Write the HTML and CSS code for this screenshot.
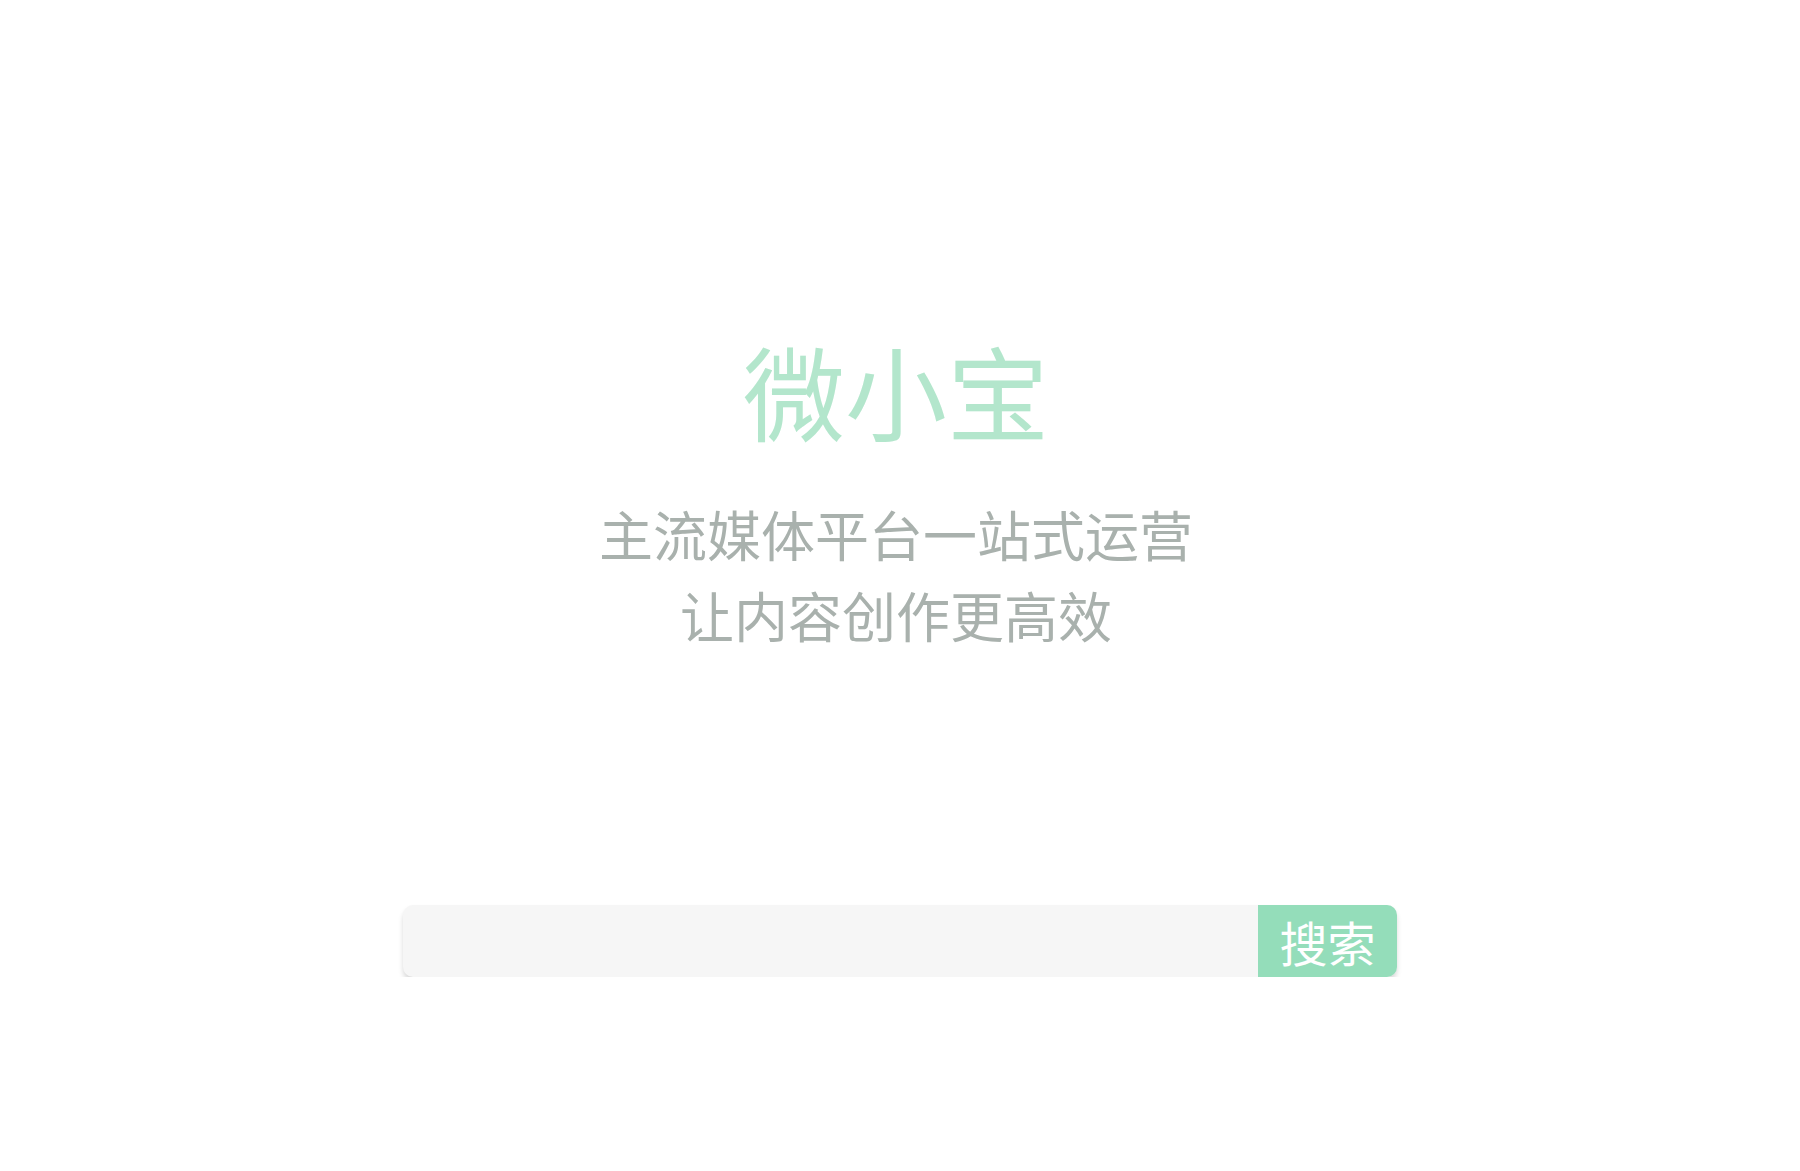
FILE: index.html
```html
<!DOCTYPE html>
<html lang="zh-CN">
<head>
<meta charset="utf-8">
<title>微小宝</title>
<link rel="stylesheet" href="styles.css">
</head>
<body>
<main class="page">
  <section class="hero">
    <h1 class="brand">微小宝</h1>
    <p class="slogan">主流媒体平台一站式运营<br>让内容创作更高效</p>
  </section>
  <form class="search" onsubmit="return false">
    <input class="search-input" type="text" aria-label="搜索">
    <button class="search-btn" type="submit">搜索</button>
  </form>
</main>
</body>
</html>
```

FILE: styles.css
```css
html, body {
  margin: 0;
  padding: 0;
  background: #ffffff;
}

body {
  font-family: "Noto Sans CJK SC", "Noto Sans", sans-serif;
}

.page {
  display: flex;
  flex-direction: column;
  align-items: center;
  padding-top: 330px;
}

.hero {
  display: flex;
  flex-direction: column;
  align-items: center;
  padding-right: 8px;
}

.brand {
  margin: 0;
  font-size: 102px;
  line-height: 120px;
  font-weight: 400;
  color: #b3e6cc;
}

.slogan {
  margin: 43px 0 0;
  font-size: 54px;
  line-height: 81px;
  color: #a9b1ad;
  text-align: center;
}

.search {
  display: flex;
  width: 994px;
  height: 72px;
  margin-top: 250px;
  border-radius: 10px;
  background: #f6f6f6;
  box-shadow: 0 4px 5px rgba(0, 0, 0, 0.15);
  overflow: hidden;
}

.search-input {
  flex: 1;
  min-width: 0;
  border: 0;
  outline: none;
  background: transparent;
  padding: 0 20px;
  font-family: inherit;
  font-size: 28px;
}

.search-btn {
  width: 139px;
  border: 0;
  padding: 0;
  background: #94ddba;
  color: #ffffff;
  font-family: inherit;
  font-size: 48px;
  line-height: 72px;
  cursor: pointer;
}
```
